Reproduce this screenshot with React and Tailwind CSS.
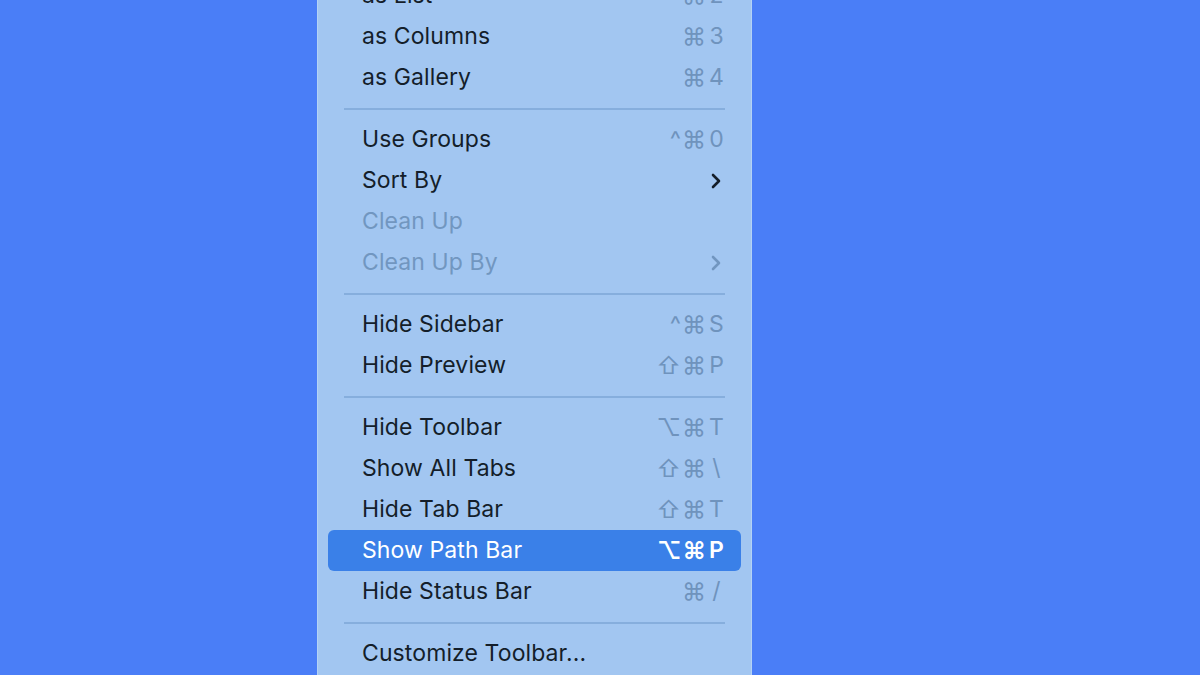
import React from 'react';

const items = [
  { label: 'as List', keys: '⌘', key: '2', check: true },
  { label: 'as Columns', keys: '⌘', key: '3' },
  { label: 'as Gallery', keys: '⌘', key: '4' },
  { sep: true },
  { label: 'Use Groups', keys: '^⌘', key: '0' },
  { label: 'Sort By', sub: true },
  { label: 'Clean Up', disabled: true },
  { label: 'Clean Up By', disabled: true, sub: true },
  { sep: true },
  { label: 'Hide Sidebar', keys: '^⌘', key: 'S' },
  { label: 'Hide Preview', keys: '⇧⌘', key: 'P' },
  { sep: true },
  { label: 'Hide Toolbar', keys: '⌥⌘', key: 'T' },
  { label: 'Show All Tabs', keys: '⇧⌘', key: '\\' },
  { label: 'Hide Tab Bar', keys: '⇧⌘', key: 'T' },
  { label: 'Show Path Bar', keys: '⌥⌘', key: 'P', active: true },
  { label: 'Hide Status Bar', keys: '⌘', key: '/' },
  { sep: true },
  { label: 'Customize Toolbar...' },
];

function Chevron({ color }) {
  return (
    <svg width="12" height="18" viewBox="0 0 12 18" fill="none">
      <path d="M3 3l6 6-6 6" stroke={color} strokeWidth="2.6" strokeLinecap="round" strokeLinejoin="round" />
    </svg>
  );
}

function Row({ item }) {
  const text = item.active
    ? 'text-white'
    : item.disabled
    ? 'text-[#7196c0]'
    : 'text-[#141e2a]';
  const keyColor = item.active ? 'text-white' : 'text-[#6f93bd]';
  return (
    <div
      className={`relative flex items-center h-[41px] mx-[10px] rounded-[6px] pl-[34px] pr-[17px] ${
        item.active ? 'bg-[#3a80e8]' : ''
      }`}
    >
      {item.check && (
        <span className="absolute left-[12px] top-[6px] text-[18px] text-[#141e2a] font-bold">✓</span>
      )}
      <span className={`flex-1 text-[23px] tracking-[0.1px] ${text}`}>{item.label}</span>
      {item.keys && (
        <span className={`flex items-center text-[23px] ${keyColor} ${item.active ? 'font-semibold' : ''}`}>
          <span className="text-[24px] tracking-[1px]">{item.keys}</span>
          <span className="w-[15px] text-center ml-[2px]">{item.key}</span>
        </span>
      )}
      {item.sub && (
        <span className="pr-[2px]">
          <Chevron color={item.disabled ? '#7196c0' : '#141e2a'} />
        </span>
      )}
    </div>
  );
}

export default function App() {
  return (
    <div
      className="w-[1200px] h-[675px] overflow-hidden bg-[#4a7ef7] pl-[317px]"
      style={{ fontFamily: 'Inter, "DejaVu Sans", sans-serif' }}
    >
      <div className="w-[435px] h-[720px] -mt-[25px] bg-[#a2c6f1] border-x border-[#b4d2f5]">
        {items.map((item, i) =>
          item.sep ? (
            <div key={i} className="h-[21px] flex items-center px-[26px]">
              <div className="h-[2px] w-full bg-[#86aedd]" />
            </div>
          ) : (
            <Row key={i} item={item} />
          )
        )}
      </div>
    </div>
  );
}
